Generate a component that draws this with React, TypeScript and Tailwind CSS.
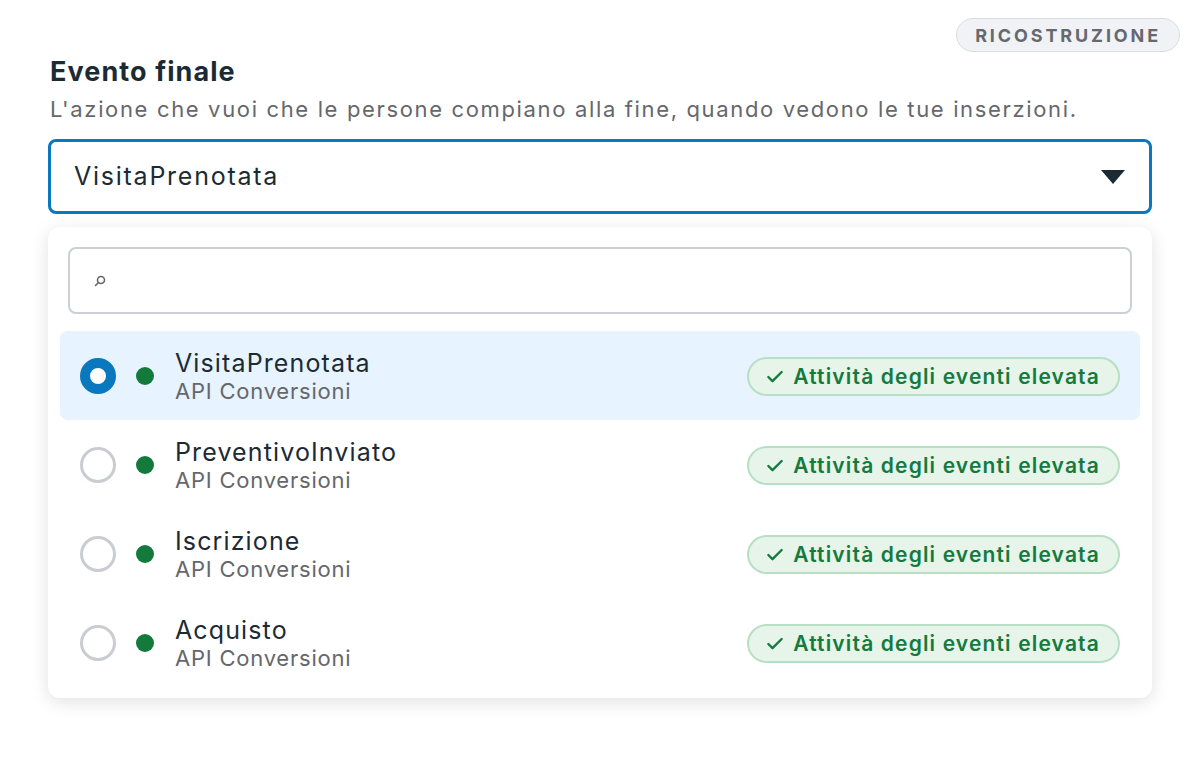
import { Check } from 'lucide-react'

const events = [
  { name: 'VisitaPrenotata', selected: true },
  { name: 'PreventivoInviato', selected: false },
  { name: 'Iscrizione', selected: false },
  { name: 'Acquisto', selected: false },
]

function Radio({ on }: { on: boolean }) {
  return on ? (
    <span className="w-9 h-9 rounded-full border-[10px] border-[#0a78be] bg-white shrink-0" />
  ) : (
    <span className="w-9 h-9 rounded-full border-[3px] border-[#c9ccd1] bg-white shrink-0" />
  )
}

export default function App() {
  return (
    <div className="w-[1200px] h-[772px] bg-white font-['Inter',sans-serif] text-[#1c2b33]">
      <div className="flex justify-end pt-[18px] pr-[20px]">
        <span className="h-[34px] px-[18px] flex items-center rounded-full bg-[#f0f2f5] border border-[#dadde1] text-[18px] font-bold tracking-[0.16em] text-[#65686f]">
          RICOSTRUZIONE
        </span>
      </div>

      <div className="px-[48px]">
        <h1 className="mt-[2px] pl-[2px] text-[27px] leading-[36px] font-bold tracking-[0.04em]">Evento finale</h1>
        <p className="pl-[2px] mt-[4px] text-[22px] leading-[30px] tracking-[0.075em] text-[#65676b]">
          L'azione che vuoi che le persone compiano alla fine, quando vedono le tue inserzioni.
        </p>

        <div className="mt-[15px] h-[75px] rounded-[8px] border-[3px] border-[#0a78be] flex items-center justify-between pl-[23px] pr-[23px]">
          <span className="text-[25px] tracking-[0.07em]">VisitaPrenotata</span>
          <svg width="26" height="16" viewBox="0 0 26 16" className="text-[#1c2b33]">
            <path d="M1 1 H25 L13 15 Z" fill="currentColor" />
          </svg>
        </div>

        <div className="mt-[13px] rounded-[12px] bg-white shadow-[0_4px_18px_rgba(0,0,0,0.12)] px-[12px] pt-[20px] pb-[11px]">
          <div className="mx-[8px] h-[67px] rounded-[8px] border-2 border-[#ccd0d5] flex items-center pl-[24px]">
            <svg width="12" height="12" viewBox="0 0 12 12" fill="none" stroke="#65676b" strokeWidth="1.6">
              <circle cx="7" cy="5" r="3.5" />
              <path d="M4.5 7.5 L1.5 10.5" strokeLinecap="round" />
            </svg>
          </div>

          <div className="mt-[17px] flex flex-col">
            {events.map((e) => (
              <div
                key={e.name}
                className={
                  'h-[89px] rounded-[8px] flex items-center pl-[20px] pr-[20px] ' +
                  (e.selected ? 'bg-[#e7f3ff]' : '')
                }
              >
                <Radio on={e.selected} />
                <span className="ml-[20px] w-[18px] h-[18px] rounded-full bg-[#137a3c] shrink-0" />
                <div className="ml-[21px] flex flex-col">
                  <span className="text-[25px] leading-[30px] tracking-[0.045em]">{e.name}</span>
                  <span className="text-[22px] leading-[26px] tracking-[0.035em] text-[#65676b]">API Conversioni</span>
                </div>
                <span className="ml-auto mt-[2px] h-[39px] pl-[16px] pr-[18px] flex items-center gap-[8px] rounded-full bg-[#e6f4ea] border-2 border-[#b7dfc3] text-[#147a3d] text-[21px] font-semibold tracking-[0.055em]">
                  <Check size={20} strokeWidth={2.8} />
                  Attività degli eventi elevata
                </span>
              </div>
            ))}
          </div>
        </div>
      </div>
    </div>
  )
}
